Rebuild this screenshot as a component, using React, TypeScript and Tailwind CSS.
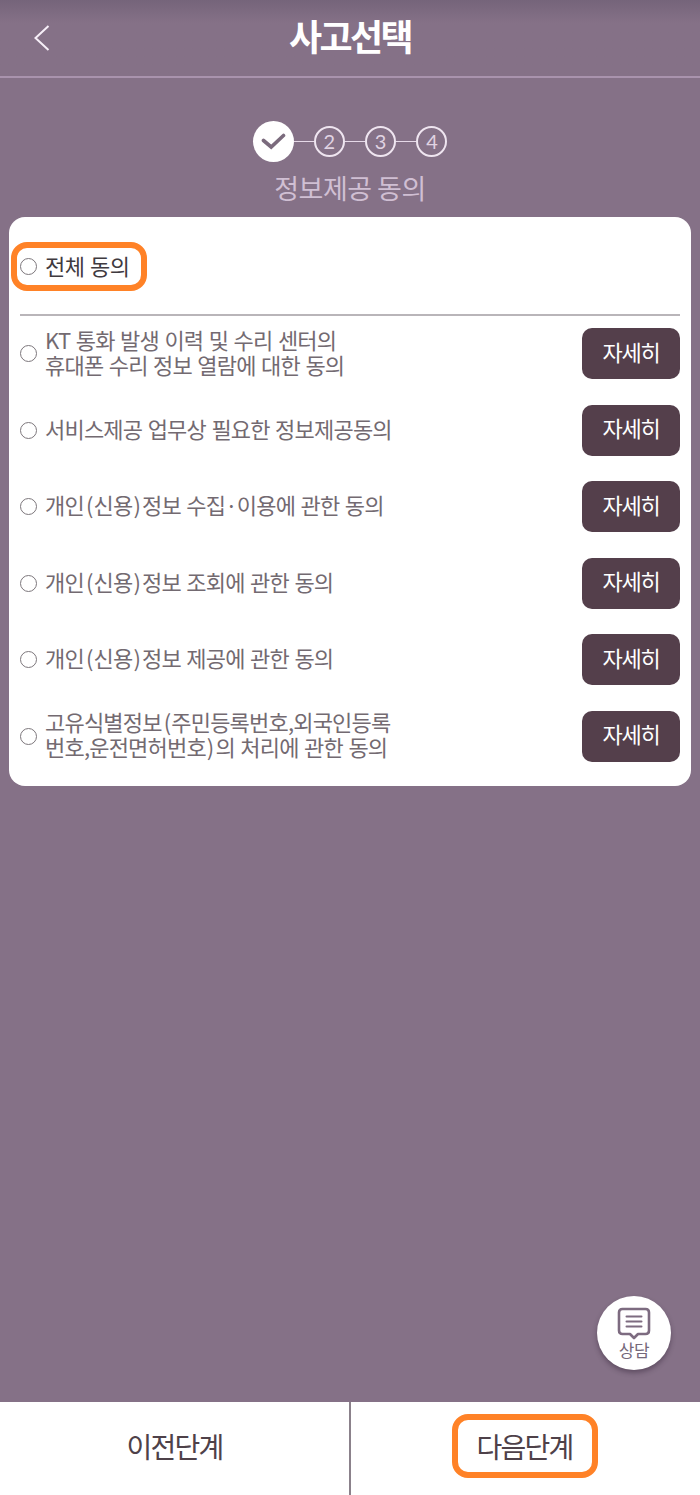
import { Fragment } from "react";

const consents = [
  { lines: ["KT 통화 발생 이력 및 수리 센터의", "휴대폰 수리 정보 열람에 대한 동의"] },
  { lines: ["서비스제공 업무상 필요한 정보제공동의"] },
  { lines: ["개인(신용)정보 수집·이용에 관한 동의"] },
  { lines: ["개인(신용)정보 조회에 관한 동의"] },
  { lines: ["개인(신용)정보 제공에 관한 동의"] },
  { lines: ["고유식별정보(주민등록번호,외국인등록", "번호,운전면허번호)의 처리에 관한 동의"] },
];

function Radio() {
  return <span className="h-[17px] w-[17px] shrink-0 rounded-full border border-[#7d777c] bg-white" />;
}

// Brackets get a little more room than the Hangul around them
function Label({ text }: { text: string }) {
  return (
    <span className="block whitespace-nowrap">
      {text.split(/([()])/).map((part, i) => {
        if (part === "(") return <span key={i} className="ml-[2px] mr-[1px]">(</span>;
        if (part === ")") return <span key={i} className="ml-[1px] mr-[2px]">)</span>;
        return part;
      })}
    </span>
  );
}

function Steps() {
  return (
    <div className="flex items-center justify-center">
      <span className="flex h-[41px] w-[41px] items-center justify-center rounded-full bg-white">
        <svg width="25" height="17" viewBox="0 0 25 17" fill="none">
          <path d="M2.5 7.5L10.2 14L22.5 2.5" stroke="#7b6b7d" strokeWidth="3.6" strokeLinecap="round" />
        </svg>
      </span>
      {[2, 3, 4].map((step) => (
        <Fragment key={step}>
          <span className="h-px w-[20.3px] bg-[#e6d9e8]" />
          <span className="flex h-[31px] w-[31px] items-center justify-center rounded-full border-2 border-[#efe5f0] pb-[2px] font-['Lato',sans-serif] text-[20px] leading-none text-[#e0d3e2]">
            {step}
          </span>
        </Fragment>
      ))}
    </div>
  );
}

export default function App() {
  return (
    <div className="relative flex h-[1495px] w-[700px] flex-col bg-[#857187] font-['Noto_Sans_CJK_KR',sans-serif]">
      {/* Header */}
      <header className="relative flex h-[78px] items-center justify-center border-b-2 border-[#a993ad] bg-linear-to-b from-[#75647a] via-[#857187] via-30% to-[#857187]">
        <button className="absolute left-[33px] top-[24px]">
          <svg width="18" height="28" viewBox="0 0 18 28" fill="none">
            <path d="M15.5 2L2.5 14L15.5 26" stroke="#f7eff8" strokeWidth="2" />
          </svg>
        </button>
        <h1 className="pb-[6px] text-[36px] font-bold leading-none tracking-[-2.6px] text-white">사고선택</h1>
      </header>

      {/* Progress */}
      <div className="pt-[43px]">
        <Steps />
        <p className="mt-[9px] text-center text-[27px] leading-[34px] tracking-[-0.5px] text-[#d0bfd3]">정보제공 동의</p>
      </div>

      {/* Consent list */}
      <main className="mx-[9px] mt-[12px] h-[569px] rounded-2xl bg-white px-[11px]">
        <div className="flex h-[99px] items-center border-b-2 border-[#b9b5b9]">
          <div className="-ml-[9px] mt-[2px] flex h-[49px] w-[136px] items-center gap-[8px] rounded-2xl border-[6px] border-[#ff8227] pl-[3px]">
            <Radio />
            <span className="whitespace-nowrap pb-[4px] text-[22px] leading-none tracking-[-0.5px] text-[#3f3a3f] [word-spacing:1px]">
              전체 동의
            </span>
          </div>
        </div>
        <ul className="flex flex-col gap-[25.5px] pt-[12px]">
          {consents.map((item) => (
            <li key={item.lines[0]} className="flex h-[51px] items-center">
              <Radio />
              <div className="ml-[8px] grow pb-[4px] text-[22px] leading-[25px] tracking-[-0.8px] text-[#736a71] [word-spacing:1.3px]">
                {item.lines.map((line) => (
                  <Label key={line} text={line} />
                ))}
              </div>
              <button className="h-[51px] w-[98px] rounded-[10px] bg-[#543f4b] pb-[6px] text-[22px] leading-none tracking-[-1.3px] text-white">
                자세히
              </button>
            </li>
          ))}
        </ul>
      </main>

      {/* Chat button */}
      <button className="absolute left-[597px] top-[1296px] flex h-[74px] w-[74px] flex-col items-center rounded-full bg-white pt-[11px] shadow-[0_3px_5px_rgba(50,35,55,0.45)]">
        <svg width="34" height="34" viewBox="0 0 34 34" fill="none" stroke="#7d6b80">
          <path
            d="M5.5 2H28.5Q32 2 32 5.5V23.5Q32 27 28.5 27H21L17 31L13 27H5.5Q2 27 2 23.5V5.5Q2 2 5.5 2Z"
            strokeWidth="2.6"
            strokeLinejoin="round"
          />
          <path d="M9.5 9.5H24.5M9.5 14.5H24.5M9.5 19.5H24.5" strokeWidth="2" strokeLinecap="round" />
        </svg>
        <span className="text-[17px] leading-[18px] tracking-[-0.4px] text-[#75687a]">상담</span>
      </button>

      {/* Footer */}
      <footer className="mt-auto flex h-[93px] bg-white text-[28px] leading-none tracking-[-1.7px] text-[#4e4149]">
        <button className="h-full w-[351px] border-r-2 border-[#8b818b] pb-[5px]">이전단계</button>
        <div className="flex grow justify-center pr-[2px] pt-[12px]">
          <button className="h-[64px] w-[146px] rounded-2xl border-[6px] border-[#ff8227]">다음단계</button>
        </div>
      </footer>
    </div>
  );
}
